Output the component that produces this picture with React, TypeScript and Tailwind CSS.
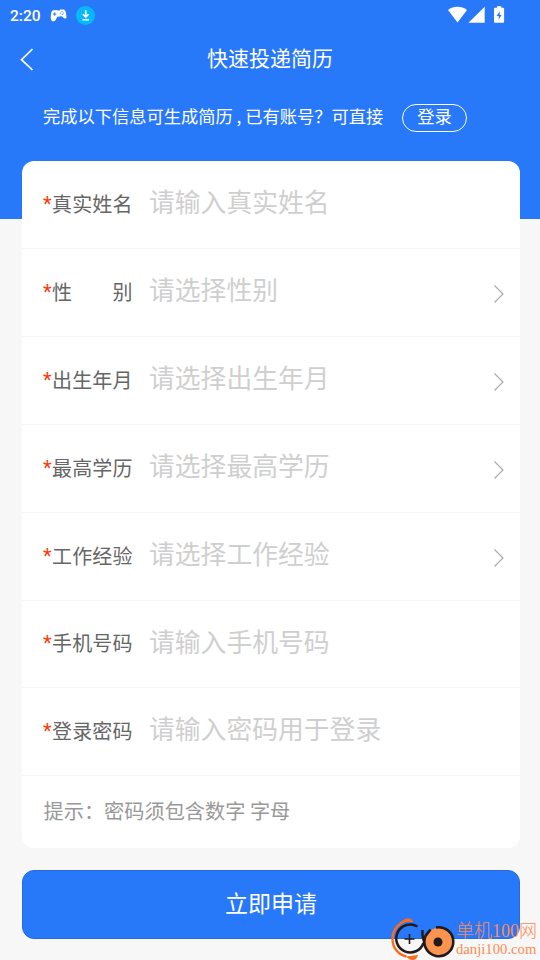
import React from 'react';

interface Field {
    label: string;
    placeholder: string;
    select?: boolean;
    height: string;
}

const fields: Field[] = [
    { label: '真实姓名', placeholder: '请输入真实姓名', height: 'h-[88px]' },
    { label: '性别', placeholder: '请选择性别', select: true, height: 'h-[88px]' },
    { label: '出生年月', placeholder: '请选择出生年月', select: true, height: 'h-[88px]' },
    { label: '最高学历', placeholder: '请选择最高学历', select: true, height: 'h-[88px]' },
    { label: '工作经验', placeholder: '请选择工作经验', select: true, height: 'h-[88px]' },
    { label: '手机号码', placeholder: '请输入手机号码', height: 'h-[87px]' },
    { label: '登录密码', placeholder: '请输入密码用于登录', height: 'h-[88px]' },
];

const GamepadIcon = () => (
    <svg className="w-[17px] h-[13px]" viewBox="0 0 17 13">
        <path d="M3.5 1.3 7 .9l.6.7 2-.2.6-.9 3.3-.1c1.3.2 2 1.3 2.3 2.9l.7 4.4c.1 1.3-.6 2-1.6 1.9-1.2-.1-1.8-1.5-3.1-2.3l-4.3.5C6.3 9 6 11.2 4.6 12c-1.3.7-2.9.3-3.4-1C.4 8.8.8 5.5 1.3 3.5 1.6 2.3 2.3 1.5 3.5 1.3Z" fill="#fff" />
        <path d="M4.7 3.4v3.4M3 5.1h3.4" stroke="#2878fa" strokeWidth="1" />
        <circle cx="10.3" cy="4" r=".6" fill="#2878fa" />
        <circle cx="12" cy="2.7" r=".6" fill="#2878fa" />
        <circle cx="13.4" cy="4" r=".6" fill="#2878fa" />
        <circle cx="12.2" cy="5.3" r=".6" fill="#2878fa" />
    </svg>
);

const DownloadBadge = () => (
    <svg className="w-[19px] h-[19px]" viewBox="0 0 19 19">
        <circle cx="9.5" cy="9.5" r="9.5" fill="#08b8ff" />
        <path d="M9.7 4.3v6.7M6.9 8.3l2.8 2.8 2.8-2.8M6.5 13.7h6.4" fill="none" stroke="#fff" strokeWidth="1.6" />
    </svg>
);

const StatusIcons = () => (
    <svg className="w-[57px] h-[18px] mb-px" viewBox="0 0 57 18" fill="#fff">
        <path d="M0 4C5.5-.4 13.5-.4 19 4L9.5 16.5Z" />
        <path d="M36.7.7v16H20.5Z" />
        <path d="M49 .2h4.3v1.6h2c.5 0 .8.3.8.8v13.3c0 .5-.3.8-.8.8h-8.5c-.5 0-.8-.3-.8-.8V2.6c0-.5.3-.8.8-.8H49Z" />
        <path d="M51.7 5.2 48.6 10h2.1v3.5L53.6 9h-1.9Z" fill="#2878fa" />
    </svg>
);

const ChevronRight = () => (
    <svg className="w-3 h-5 mt-0.5" viewBox="0 0 12 20" fill="none" stroke="#a9a9a9" strokeWidth="1.1">
        <path d="m1.5 1.5 8.5 8.5-8.5 8.5" />
    </svg>
);

const SiteMark = () => (
    <div className="absolute left-[390px] top-[917px] flex w-[150px] h-[43px] text-[#fc8b50]">
        <svg className="w-[65px] h-[43px] shrink-0" viewBox="0 0 65 43" fill="none">
            <path d="M20 3C10 4 2.500 12 2.500 22c0 9 6 16 14 17.500" stroke="#fb6d1c" strokeWidth="2.400" />
            <path d="M11 5C15 1 19-.5 22.500 3.500L23 5ZM16 39.500l12-1.500c-1 5-5 6-9 4Z" fill="#fb6d1c" />
            <path d="M27.500 9.500A14 14 0 1 0 33.500 26M32.500 13c-.5 6 1 11 3 14" stroke="#211b1b" strokeWidth="2.500" />
            <path d="M19.500 17v10M14.500 22h10" stroke="#211b1b" strokeWidth="1.600" />
            <circle cx="48.300" cy="25" r="14" fill="#fc934f" />
            <path d="M46 10.500A14.500 14.500 0 1 1 35.500 19l5-6.500" stroke="#211b1b" strokeWidth="2.600" />
            <circle cx="48" cy="25" r="4.500" fill="#211b1b" />
        </svg>
        <div className="ml-px font-['Liberation_Serif','Noto_Sans_CJK_SC',serif] whitespace-nowrap">
            <div className="mt-1 text-[18px] leading-[20px] font-light">单机100网</div>
            <div className="text-[14.700px] leading-[16px]">danji100.com</div>
        </div>
    </div>
);

const App: React.FC = () => {
    return (
        <div className="relative w-[540px] h-[960px] overflow-hidden bg-[#f7f7f7] font-['Noto_Sans_CJK_SC',sans-serif] font-normal">
            <header className="h-[219px] bg-[#2878fa] text-white">
                <div className="flex items-center h-[31px] pl-[10px] pr-[35px]">
                    <span className="w-10 font-[Roboto,sans-serif] text-[15.5px] font-medium leading-5">2:20</span>
                    <span className="w-[26px]"><GamepadIcon /></span>
                    <DownloadBadge />
                    <span className="ml-auto"><StatusIcons /></span>
                </div>
                <div className="grid grid-cols-[60px_1fr_60px] items-center h-[56px]">
                    <button className="pl-5" aria-label="返回">
                        <svg className="w-[14px] h-[23px]" viewBox="0 0 14 23" fill="none" stroke="#fff" strokeWidth="1.7">
                            <path d="M12.5 1 1.5 11.7l11 10.3" />
                        </svg>
                    </button>
                    <h1 className="text-center text-[21px] leading-[30px] -mt-[5px]">快速投递简历</h1>
                </div>
                <div className="flex items-center h-[62px] pl-[43px] text-[17.25px]">
                    <p className="w-[359px] whitespace-nowrap leading-[26px] -mt-[5px]">完成以下信息可生成简历 , 已有账号？可直接</p>
                    <button className="w-[65px] h-7 rounded-full border border-white leading-[22px] pb-[4px]">登录</button>
                </div>
            </header>

            <main className="pl-[22px] pr-5 -mt-[58px]">
                <section className="h-[687px] rounded-[12px] bg-white">
                    {fields.map(field => (
                        <div key={field.label} className={`flex items-center border-b border-[#f5f5f5] pl-[21px] pr-[15px] ${field.height}`}>
                            <label className="flex w-[106px] text-[20px] leading-[30px] text-[#666] -mt-[2px]">
                                <span className="w-[9px] font-[Roboto,sans-serif] text-[#ff3b0a]">*</span>
                                <span className="flex w-[80.5px] justify-between">
                                    {field.label.split('').map(char => <span key={char}>{char}</span>)}
                                </span>
                            </label>
                            <span className="flex-1 text-[25.8px] leading-[38px] text-[#cfcfcf] -mt-[7px]">{field.placeholder}</span>
                            {field.select && <ChevronRight />}
                        </div>
                    ))}
                    <p className="pl-[21.5px] pt-[20px] text-[20.2px] leading-[30px] text-[#999]">提示：密码须包含数字 字母</p>
                </section>
                <button className="mt-[22px] h-[69px] w-full rounded-[12px] border border-[#246bdd] bg-[#2878fa] pb-[5px] text-[23px] text-white">立即申请</button>
            </main>

            <SiteMark />
        </div>
    );
};

export default App;
